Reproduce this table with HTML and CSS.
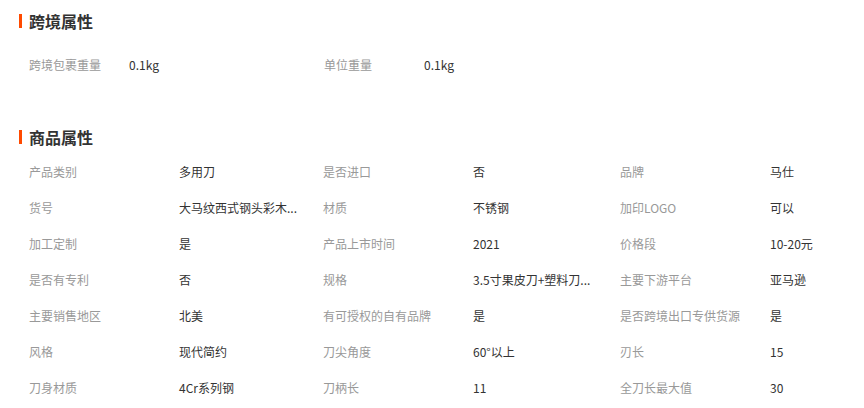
FILE: index.html
```html
<!DOCTYPE html>
<html lang="zh-CN">
<head>
    <meta charset="UTF-8">
    <meta name="viewport" content="width=device-width, initial-scale=1.0">
    <title>商品属性</title>
    <link rel="stylesheet" href="styles.css">
</head>
<body>
    <section class="attr-block">
        <h2 class="attr-title">跨境属性</h2>
        <div class="attr-list attr-list-cross">
            <div class="attr-item">
                <span class="attr-label">跨境包裹重量</span>
                <span class="attr-value">0.1kg</span>
            </div>
            <div class="attr-item">
                <span class="attr-label">单位重量</span>
                <span class="attr-value">0.1kg</span>
            </div>
        </div>
    </section>

    <section class="attr-block attr-block-goods">
        <h2 class="attr-title">商品属性</h2>
        <div class="attr-list attr-list-goods">
            <div class="attr-item"><span class="attr-label">产品类别</span><span class="attr-value">多用刀</span></div>
            <div class="attr-item"><span class="attr-label">是否进口</span><span class="attr-value">否</span></div>
            <div class="attr-item"><span class="attr-label">品牌</span><span class="attr-value">马仕</span></div>

            <div class="attr-item"><span class="attr-label">货号</span><span class="attr-value" title="大马纹西式钢头彩木柄水果刀">大马纹西式钢头彩木...</span></div>
            <div class="attr-item"><span class="attr-label">材质</span><span class="attr-value">不锈钢</span></div>
            <div class="attr-item"><span class="attr-label">加印LOGO</span><span class="attr-value">可以</span></div>

            <div class="attr-item"><span class="attr-label">加工定制</span><span class="attr-value">是</span></div>
            <div class="attr-item"><span class="attr-label">产品上市时间</span><span class="attr-value">2021</span></div>
            <div class="attr-item"><span class="attr-label">价格段</span><span class="attr-value">10-20元</span></div>

            <div class="attr-item"><span class="attr-label">是否有专利</span><span class="attr-value">否</span></div>
            <div class="attr-item"><span class="attr-label">规格</span><span class="attr-value" title="3.5寸果皮刀+塑料刀套">3.5寸果皮刀+塑料刀...</span></div>
            <div class="attr-item"><span class="attr-label">主要下游平台</span><span class="attr-value">亚马逊</span></div>

            <div class="attr-item"><span class="attr-label">主要销售地区</span><span class="attr-value">北美</span></div>
            <div class="attr-item"><span class="attr-label">有可授权的自有品牌</span><span class="attr-value">是</span></div>
            <div class="attr-item"><span class="attr-label">是否跨境出口专供货源</span><span class="attr-value">是</span></div>

            <div class="attr-item"><span class="attr-label">风格</span><span class="attr-value">现代简约</span></div>
            <div class="attr-item"><span class="attr-label">刀尖角度</span><span class="attr-value">60°以上</span></div>
            <div class="attr-item"><span class="attr-label">刃长</span><span class="attr-value">15</span></div>

            <div class="attr-item"><span class="attr-label">刀身材质</span><span class="attr-value">4Cr系列钢</span></div>
            <div class="attr-item"><span class="attr-label">刀柄长</span><span class="attr-value">11</span></div>
            <div class="attr-item"><span class="attr-label">全刀长最大值</span><span class="attr-value">30</span></div>
        </div>
    </section>
</body>
</html>
```

FILE: styles.css
```css
:root {
    --accent: #ff4a00;
    --title-color: #333333;
    --label-color: #999999;
    --value-color: #333333;
}

body {
    margin: 0;
    padding: 11px 0 0 19px;
    background: #ffffff;
    font-family: "Noto Sans CJK SC", "Microsoft YaHei", sans-serif;
    font-size: 12px;
    color: var(--value-color);
}

.attr-title {
    margin: 0;
    padding-left: 10px;
    position: relative;
    font-size: 16px;
    font-weight: bold;
    line-height: 20px;
    color: var(--title-color);
}

/* orange marker in front of the heading */
.attr-title::before {
    content: "";
    position: absolute;
    left: 0;
    top: 3px;
    width: 3px;
    height: 14px;
    background: var(--accent);
}

.attr-block-goods {
    margin-top: 44px;
}

.attr-list {
    display: grid;
    padding-left: 10px;
}

.attr-list-cross {
    grid-template-columns: 295px 295px;
    padding-top: 16px;
}

.attr-list-goods {
    grid-template-columns: 294px 297px 1fr;
    padding-top: 7px;
}

.attr-item {
    display: flex;
    line-height: 36px;
    white-space: nowrap;
}

.attr-label {
    flex: none;
    width: 150px;
    color: var(--label-color);
}

.attr-list-cross .attr-label {
    width: 100px;
}

.attr-value {
    color: var(--value-color);
}
```
